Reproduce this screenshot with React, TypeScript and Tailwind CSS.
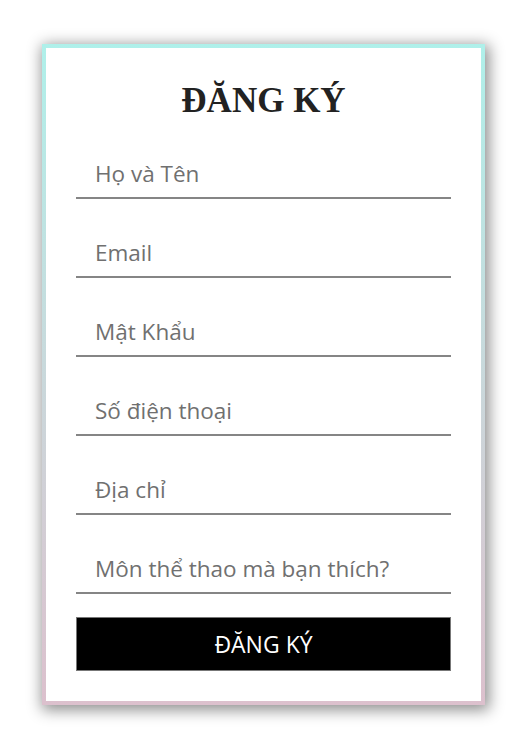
import React from 'react'

const fields = ['Họ và Tên', 'Email', 'Mật Khẩu', 'Số điện thoại', 'Địa chỉ', 'Môn thể thao mà bạn thích?']

const App = () => {
   return (
      <div className="min-h-screen w-full bg-white pt-[44px] pl-[42px]">
         <div className="w-[443px] h-[661px] p-[4px] bg-gradient-to-b from-[#aff0ea] to-[#dcc0cd] shadow-[2px_3px_14px_2px_rgba(0,0,0,0.45)]">
            <form className="h-full w-full bg-white px-[30px] pt-[30px]" onSubmit={(e) => e.preventDefault()}>
               <h2 className="text-center text-[35px] leading-[46px] font-bold text-[#222] font-['Liberation_Serif',serif]">
                  ĐĂNG KÝ
               </h2>
               {fields.map((field, index) => (
                  <div key={index} className={`${index === 0 ? 'mt-[25px]' : 'mt-[29px]'} h-[50px] border-b-2 border-[#858585]`}>
                     <input
                        type="text"
                        placeholder={field}
                        className="h-full w-full px-[19px] text-[22.5px] text-[#333] outline-none placeholder:text-[#707070] font-['Open_Sans',sans-serif]"
                     />
                  </div>
               ))}
               <button className="mt-[23px] h-[54px] w-full bg-black border border-[#777] text-white text-[23px] font-['Open_Sans',sans-serif]">
                  ĐĂNG KÝ
               </button>
            </form>
         </div>
      </div>
   )
}

export default App
